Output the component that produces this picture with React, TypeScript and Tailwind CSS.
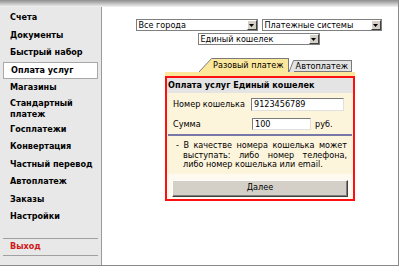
import React from 'react';

const font = { fontFamily: '"DejaVu Sans Condensed", "DejaVu Sans", Verdana, sans-serif' };

const menu = [
  'Счета',
  'Документы',
  'Быстрый набор',
  'Оплата услуг',
  'Магазины',
  'Стандартный платеж',
  'Госплатежи',
  'Конвертация',
  'Частный перевод',
  'Автоплатеж',
  'Заказы',
  'Настройки',
];

const Arrow = () => (
  <div className="flex h-[10px] w-[10px] items-center justify-center border border-t-white border-l-white border-r-[#404040] border-b-[#404040] bg-[#d4d0c8]">
    <svg width="5" height="3" viewBox="0 0 5 3">
      <path d="M0 0h5L2.5 3z" fill="#000" />
    </svg>
  </div>
);

const Select = ({ label, w }: { label: string; w: string }) => (
  <div className={`flex h-[12px] items-center justify-between border border-[#7f7f7f] bg-white ${w}`}>
    <span className="pl-[2px] text-[9px] leading-none text-black">{label}</span>
    <Arrow />
  </div>
);

export default function App() {
  return (
    <div className="h-[267px] w-[400px] overflow-hidden bg-white" style={font}>
      <div className="flex h-[266px] w-[399px] flex-col border-r border-b border-[#8a8a8a]">
        <div className="h-[7px] bg-gradient-to-b from-[#8e8e8e] to-[#f4f4f4]" />
        <div className="flex flex-1">
          {/* sidebar */}
          <div className="flex w-[102px] flex-col border-r border-[#9a9a9a] bg-[#e8e8e8] pt-[2px]">
            {menu.map((m) =>
              m === 'Оплата услуг' ? (
                <div key={m} className="mx-[3px] flex h-[17.5px] items-center border border-[#a8a8a8] bg-white pl-[7px] text-[9px] font-bold text-black">
                  {m}
                </div>
              ) : (
                <div key={m} className="flex min-h-[17.5px] items-center py-[1px] pl-[10px] pr-[8px] text-[9px] font-bold leading-[11px] text-black">
                  {m}
                </div>
              )
            )}
            <div className="mx-[3px] mt-[12px] border-t border-[#a0a0a0]" />
            <div className="flex h-[16px] items-center pl-[10px] text-[9px] font-bold text-[#d01818]">Выход</div>
            <div className="mx-[3px] border-t border-[#a0a0a0]" />
          </div>

          {/* main */}
          <div className="flex flex-1 flex-col items-center pl-[17px] pt-[12px]">
            <div className="flex gap-[4px]">
              <Select label="Все города" w="w-[122px]" />
              <Select label="Платежные системы" w="w-[120px]" />
            </div>
            <div className="mt-[2px]">
              <Select label="Единый кошелек" w="w-[122px]" />
            </div>

            <div className="ml-[3px] mt-[13px] w-[190px]">
              {/* tabs */}
              <div className="flex items-end justify-end pr-[3px]">
                <svg width="13" height="14" viewBox="0 0 13 14" className="block">
                  <path d="M0 14L12.5 0.5H13V14z" fill="#fce89c" />
                  <path d="M0 14L12.5 0.5H13" fill="none" stroke="#7a7a7a" strokeWidth="1" />
                </svg>
                <div className="flex h-[14px] items-center border-t border-r border-[#7a7a7a] bg-[#fce89c] pl-[1px] pr-[4px] text-[9px] leading-none text-black">
                  Разовый платеж
                </div>
                <svg width="5" height="12" viewBox="0 0 5 12" className="block">
                  <path d="M0 12L4.5 0.5H5V12z" fill="#e4e4e4" />
                  <path d="M0 12L4.5 0.5H5" fill="none" stroke="#7a7a7a" strokeWidth="1" />
                </svg>
                <div className="flex h-[12px] items-center border-t border-r border-b border-[#7a7a7a] bg-[#e4e4e4] pl-[2px] pr-[3px] text-[9px] leading-none text-black">
                  Автоплатеж
                </div>
              </div>
              <div className="h-[4px] bg-[#fce89c]" />

              {/* form */}
              <div className="border-2 border-[#ff1010] bg-[#fdf4dc]">
                <div className="flex h-[15px] items-center bg-[#e4e4e4] pl-[1px] text-[9px] font-bold text-black">
                  Оплата услуг Единый кошелек
                </div>
                <div className="flex items-center pt-[5px] text-[9px] text-black">
                  <span className="w-[84px] whitespace-nowrap pl-[6px]">Номер кошелька</span>
                  <div className="flex h-[13px] w-[93px] items-center border border-t-[#7a7a7a] border-l-[#7a7a7a] border-r-[#e0e0e0] border-b-[#e0e0e0] bg-white pl-[2px]">
                    9123456789
                  </div>
                </div>
                <div className="flex items-center pt-[6px] text-[9px] text-black">
                  <span className="w-[85px] pl-[6px]">Сумма</span>
                  <div className="flex h-[12px] w-[59px] items-center border border-t-[#7a7a7a] border-l-[#7a7a7a] border-r-[#e0e0e0] border-b-[#e0e0e0] bg-white pl-[2px]">
                    100
                  </div>
                  <span className="pl-[4px]">руб.</span>
                </div>
                <div className="mx-[1px] mt-[3px] h-[2px] bg-[#7878a8]" />
                <p className="pb-[4px] pl-[16px] pr-[6px] pt-[5px] text-justify -indent-[7px] text-[9px] leading-[9.5px] text-black">
                  - В качестве номера кошелька может выступать: либо номер телефона, либо номер кошелька или email.
                </p>
                <div className="bg-[#fffaf0] px-[5px] pb-[2px] pt-[6px]">
                  <div className="flex h-[17px] items-center justify-center border border-t-white border-l-white border-r-[#404040] border-b-[#404040] bg-[#d4d0c8] text-[9px] text-black shadow-[inset_-1px_-1px_0_#808080]">
                    Далее
                  </div>
                </div>
              </div>
            </div>
          </div>
        </div>
      </div>
    </div>
  );
}
